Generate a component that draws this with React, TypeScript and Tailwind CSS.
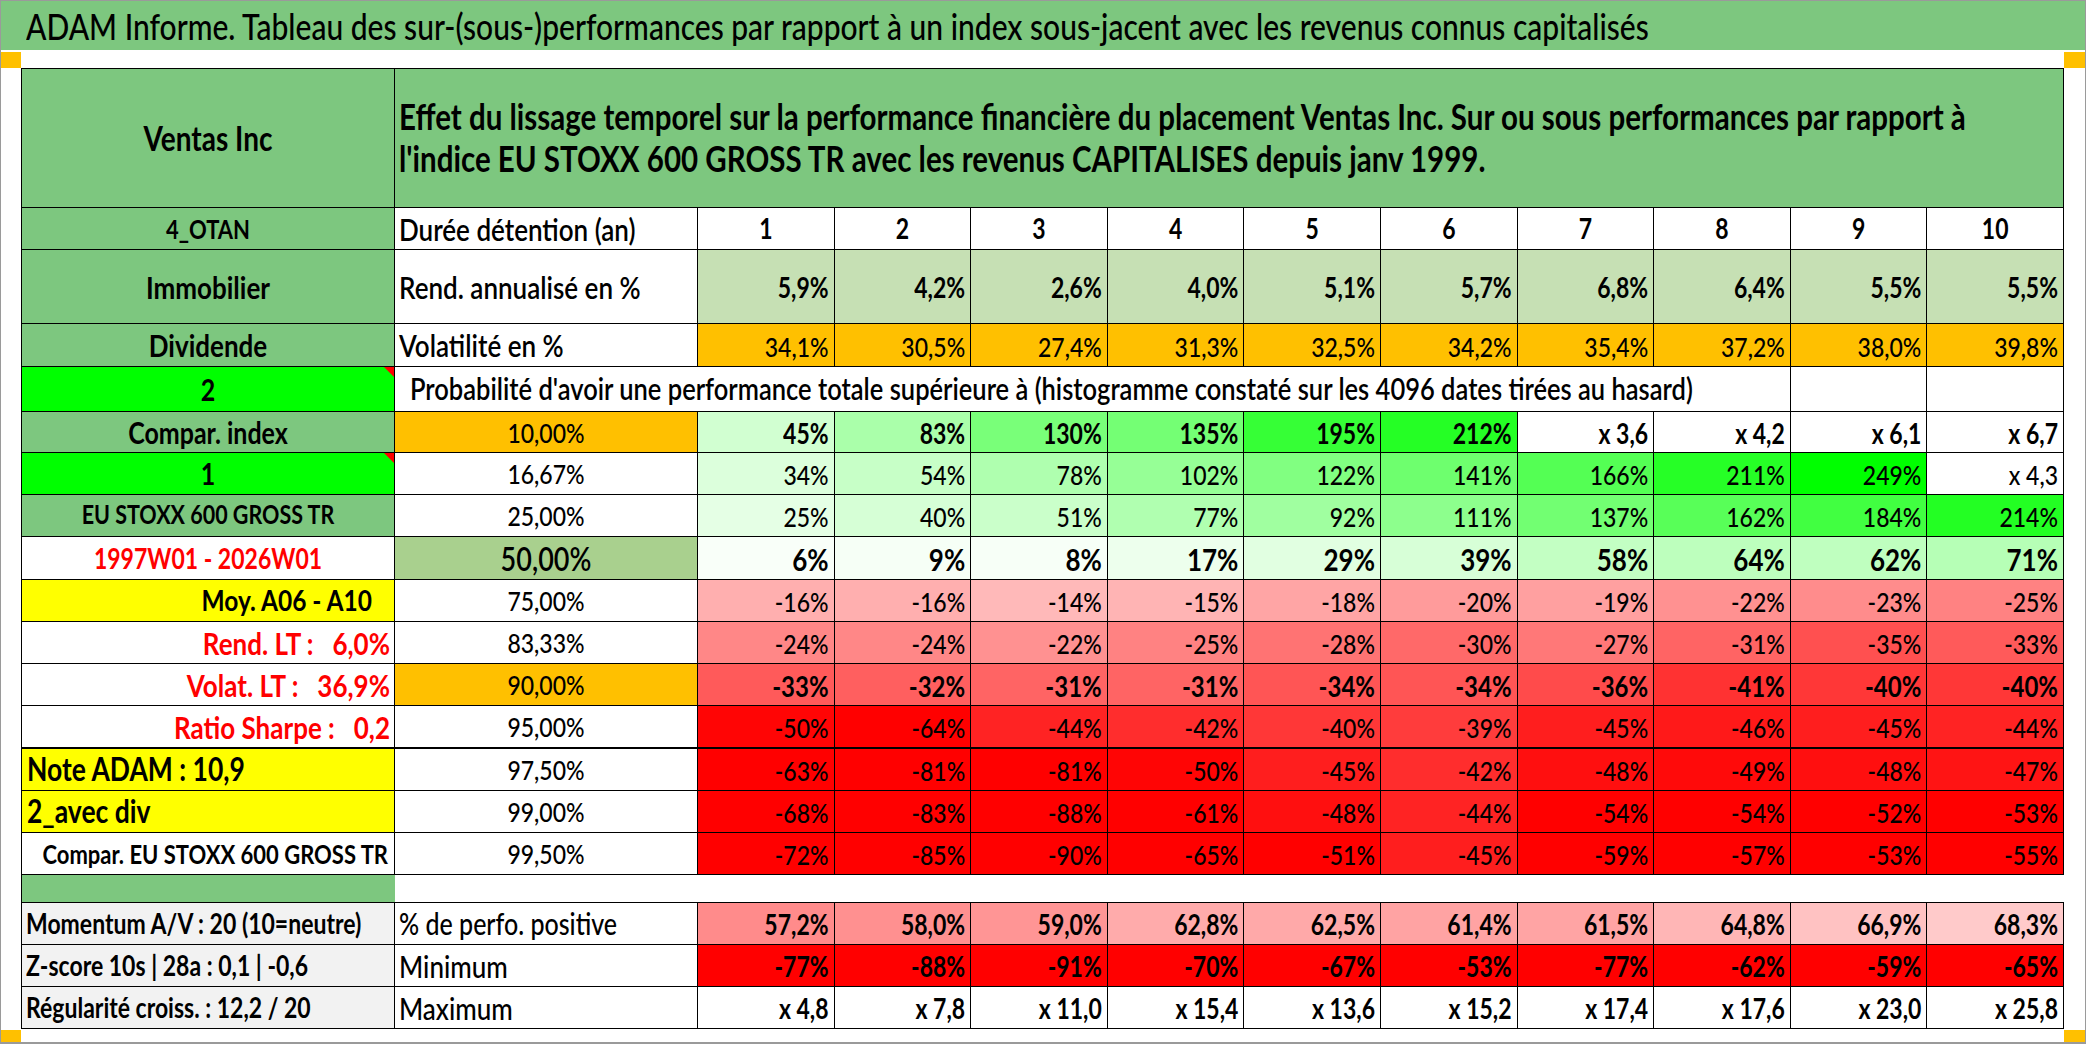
import React from 'react';

type V = number | string;

// conditional-format style colour scales (computed from the cell value)
const greenBg = (v: V) => {
    if (typeof v !== 'number') return '#ffffff';
    const g = Math.max(0, Math.round(255 - v * 1.03));
    return `rgb(${g},255,${g})`;
};
const redBg = (v: V) => {
    if (typeof v !== 'number') return '#ffffff';
    const t = Math.min(1, Math.abs(v) / 51);
    const g = Math.round(255 * (1 - t));
    return `rgb(255,${g},${g})`;
};
const pinkBg = (v: number) => {
    const g = Math.min(255, Math.round(139 + (v - 57.2) * 5.7));
    return `rgb(255,${g},${g})`;
};
const fmt = (v: V) => (typeof v === 'number' ? `${v}%` : v);
const comma = (n: number) => n.toFixed(1).replace('.', ',') + '%';

const ROW = 'grid grid-cols-[373px_303px_repeat(10,minmax(0,1fr))]';
const CELL = 'flex items-center border-r border-b border-black whitespace-nowrap overflow-hidden leading-none';
const VAL = `${CELL} justify-end pr-[5px] pt-[2px]`;

// the sheet capture is a bit taller than wide, so the glyphs are stretched vertically
const T = ({ children }: { children: React.ReactNode }) => (
    <span className="inline-block scale-y-[1.2]">{children}</span>
);

const Triangle = () => (
    <span className="absolute right-0 top-0 h-0 w-0 border-l-[10px] border-t-[10px] border-l-transparent border-t-[#ff0000]" />
);

const rend = ['5,9%', '4,2%', '2,6%', '4,0%', '5,1%', '5,7%', '6,8%', '6,4%', '5,5%', '5,5%'];
const vol = ['34,1%', '30,5%', '27,4%', '31,3%', '32,5%', '34,2%', '35,4%', '37,2%', '38,0%', '39,8%'];

const probRows: {
    label: string; lc: string; tri?: boolean; pct: string; pc: string;
    vals: V[]; vc: string; neg?: boolean; h: string; thick?: boolean;
}[] = [
    { label: 'Compar. index', lc: 'bg-[#7dc77f] justify-center font-bold text-[25px]', pct: '10,00%', pc: 'bg-[#ffc000] text-[23px] font-medium', vals: [45, 83, 130, 135, 195, 212, 'x 3,6', 'x 4,2', 'x 6,1', 'x 6,7'], vc: 'font-bold text-[23px]', h: 'h-[41px]' },
    { label: '1', lc: 'bg-[#00ff00] justify-center font-bold text-[25px]', tri: true, pct: '16,67%', pc: 'text-[23px] font-medium', vals: [34, 54, 78, 102, 122, 141, 166, 211, 249, 'x 4,3'], vc: 'text-[23px] font-medium', h: 'h-[42px]' },
    { label: 'EU STOXX 600 GROSS TR', lc: 'bg-[#7dc77f] justify-center font-bold text-[21.5px]', pct: '25,00%', pc: 'text-[23px] font-medium', vals: [25, 40, 51, 77, 92, 111, 137, 162, 184, 214], vc: 'text-[23px] font-medium', h: 'h-[42px]' },
    { label: '1997W01 - 2026W01', lc: 'justify-center font-bold text-[23px] text-[#ff0000]', pct: '50,00%', pc: 'bg-[#a9d08e] text-[27px] font-semibold', vals: [6, 9, 8, 17, 29, 39, 58, 64, 62, 71], vc: 'font-bold text-[26px]', h: 'h-[43px]' },
    { label: 'Moy. A06 - A10', lc: 'bg-[#ffff00] justify-end pr-[22px] font-bold text-[24.5px]', pct: '75,00%', pc: 'text-[23px] font-medium', vals: [-16, -16, -14, -15, -18, -20, -19, -22, -23, -25], vc: 'text-[23px] font-medium', neg: true, h: 'h-[42px]' },
    { label: 'Rend. LT :\u00a0\u00a0\u00a06,0%', lc: 'justify-end pr-[4px] font-bold text-[26px] text-[#ff0000]', pct: '83,33%', pc: 'text-[23px] font-medium', vals: [-24, -24, -22, -25, -28, -30, -27, -31, -35, -33], vc: 'text-[23px] font-medium', neg: true, h: 'h-[42px]' },
    { label: 'Volat. LT :\u00a0\u00a0\u00a036,9%', lc: 'justify-end pr-[4px] font-bold text-[26px] text-[#ff0000]', pct: '90,00%', pc: 'bg-[#ffc000] text-[23px] font-medium', vals: [-33, -32, -31, -31, -34, -34, -36, -41, -40, -40], vc: 'font-bold text-[24px]', neg: true, h: 'h-[42px]' },
    { label: 'Ratio Sharpe :\u00a0\u00a0\u00a00,2', lc: 'justify-end pr-[4px] font-bold text-[26px] text-[#ff0000]', pct: '95,00%', pc: 'text-[23px] font-medium', vals: [-50, -64, -44, -42, -40, -39, -45, -46, -45, -44], vc: 'text-[23px] font-medium', neg: true, h: 'h-[43px]', thick: true },
    { label: 'Note ADAM : 10,9', lc: 'bg-[#ffff00] justify-start pl-[5px] font-bold text-[26.5px]', pct: '97,50%', pc: 'text-[23px] font-medium', vals: [-63, -81, -81, -50, -45, -42, -48, -49, -48, -47], vc: 'text-[23px] font-medium', neg: true, h: 'h-[42px]' },
    { label: '2_avec div', lc: 'bg-[#ffff00] justify-start pl-[5px] font-bold text-[26.5px]', pct: '99,00%', pc: 'text-[23px] font-medium', vals: [-68, -83, -88, -61, -48, -44, -54, -54, -52, -53], vc: 'text-[23px] font-medium', neg: true, h: 'h-[42px]' },
    { label: 'Compar. EU STOXX 600 GROSS TR', lc: 'justify-end pr-[6px] font-bold text-[22px]', pct: '99,50%', pc: 'text-[23px] font-medium', vals: [-72, -85, -90, -65, -51, -45, -59, -57, -53, -55], vc: 'text-[23px] font-medium', neg: true, h: 'h-[42px]' },
];

const momentum = [57.2, 58.0, 59.0, 62.8, 62.5, 61.4, 61.5, 64.8, 66.9, 68.3];
const minimum = [-77, -88, -91, -70, -67, -53, -77, -62, -59, -65];
const maximum = ['x 4,8', 'x 7,8', 'x 11,0', 'x 15,4', 'x 13,6', 'x 15,2', 'x 17,4', 'x 17,6', 'x 23,0', 'x 25,8'];

export default function App() {
    return (
        <div className="w-[2086px] h-[1044px] overflow-hidden bg-white border border-b-2 border-[#9a9a9a] font-['Lato',sans-serif] text-black">
            {/* Title band */}
            <div className="h-[49px] bg-[#7dc77f] flex items-center pl-[25px] text-[30px] font-medium leading-none">
                <T>ADAM Informe. Tableau des sur-(sous-)performances par rapport à un index sous-jacent avec les revenus connus capitalisés</T>
            </div>
            <div className="h-[18px] flex items-end justify-between">
                <div className="w-[20px] h-[16px] bg-[#ffc000]" />
                <div className="w-[21px] h-[16px] bg-[#ffc000]" />
            </div>

            {/* Table */}
            <div className="ml-[20px] w-[2043px] border-l border-t border-black">
                <div className={`${ROW} h-[139px]`}>
                    <div className={`${CELL} bg-[#7dc77f] justify-center font-bold text-[28px]`}><T>Ventas Inc</T></div>
                    <div className="col-span-11 flex flex-col justify-center border-r border-b border-black bg-[#7dc77f] pl-[4px] font-bold text-[29.5px] leading-[42px] whitespace-nowrap">
                        <div className="scale-y-[1.2] origin-left">Effet du lissage temporel sur la performance financière du placement Ventas Inc. Sur ou sous performances par rapport à</div>
                        <div className="scale-y-[1.2] origin-left">l'indice EU STOXX 600 GROSS TR avec les revenus CAPITALISES depuis janv 1999.</div>
                    </div>
                </div>

                <div className={`${ROW} h-[42px]`}>
                    <div className={`${CELL} bg-[#7dc77f] justify-center font-bold text-[22px]`}><T>4_OTAN</T></div>
                    <div className={`${CELL} pl-[4px] font-semibold text-[26px]`}><T>Durée détention (an)</T></div>
                    {Array.from({ length: 10 }, (_, i) => (
                        <div key={i} className={`${CELL} justify-center font-bold text-[23px]`}><T>{i + 1}</T></div>
                    ))}
                </div>

                <div className={`${ROW} h-[74px]`}>
                    <div className={`${CELL} bg-[#7dc77f] justify-center font-bold text-[26px]`}><T>Immobilier</T></div>
                    <div className={`${CELL} pl-[4px] font-semibold text-[26px]`}><T>Rend. annualisé en %</T></div>
                    {rend.map((v, i) => (
                        <div key={i} className={`${VAL} bg-[#c6e0b4] font-bold text-[23px]`}><T>{v}</T></div>
                    ))}
                </div>

                <div className={`${ROW} h-[43px]`}>
                    <div className={`${CELL} bg-[#7dc77f] justify-center font-bold text-[26px]`}><T>Dividende</T></div>
                    <div className={`${CELL} pl-[4px] font-semibold text-[26px]`}><T>Volatilité en %</T></div>
                    {vol.map((v, i) => (
                        <div key={i} className={`${VAL} bg-[#ffc000] text-[23px] font-medium`}><T>{v}</T></div>
                    ))}
                </div>

                <div className={`${ROW} h-[45px]`}>
                    <div className={`${CELL} relative bg-[#00ff00] justify-center font-bold text-[25px]`}>
                        <T>2</T>
                        <Triangle />
                    </div>
                    <div className={`${CELL} col-span-9 pl-[15px] font-semibold text-[25.5px]`}>
                        <T>Probabilité d'avoir une performance totale supérieure à (histogramme constaté sur les 4096 dates tirées au hasard)</T>
                    </div>
                    <div className={CELL} />
                    <div className={CELL} />
                </div>

                {probRows.map((r) => (
                    <div key={r.label} className={`${ROW} ${r.h}`}>
                        <div className={`${CELL} ${r.lc} ${r.thick ? 'border-b-2' : ''} ${r.tri ? 'relative' : ''}`}>
                            <T>{r.label}</T>
                            {r.tri && <Triangle />}
                        </div>
                        <div className={`${CELL} ${r.pc} justify-center ${r.thick ? 'border-b-2' : ''}`}><T>{r.pct}</T></div>
                        {r.vals.map((v, i) => (
                            <div
                                key={i}
                                className={`${VAL} ${r.vc} ${r.thick ? 'border-b-2' : ''}`}
                                style={{ backgroundColor: r.neg ? redBg(v) : greenBg(v) }}
                            >
                                <T>{fmt(v)}</T>
                            </div>
                        ))}
                    </div>
                ))}

                {/* spacer row */}
                <div className={`${ROW} h-[28px]`}>
                    <div className="bg-[#7dc77f] border-b border-black" />
                    <div className="col-span-11 border-b border-black bg-white" />
                </div>

                <div className={`${ROW} h-[42px]`}>
                    <div className={`${CELL} bg-[#f2f2f2] pl-[4px] font-bold text-[23px]`}><T>Momentum A/V : 20 (10=neutre)</T></div>
                    <div className={`${CELL} pl-[4px] font-medium text-[25px]`}><T>% de perfo. positive</T></div>
                    {momentum.map((v, i) => (
                        <div key={i} className={`${VAL} font-bold text-[23px]`} style={{ backgroundColor: pinkBg(v) }}><T>{comma(v)}</T></div>
                    ))}
                </div>
                <div className={`${ROW} h-[42px]`}>
                    <div className={`${CELL} bg-[#f2f2f2] pl-[4px] font-bold text-[23px]`}><T>Z-score 10s | 28a : 0,1 | -0,6</T></div>
                    <div className={`${CELL} pl-[4px] font-medium text-[26px]`}><T>Minimum</T></div>
                    {minimum.map((v, i) => (
                        <div key={i} className={`${VAL} font-bold text-[23px]`} style={{ backgroundColor: redBg(v) }}><T>{fmt(v)}</T></div>
                    ))}
                </div>
                <div className={`${ROW} h-[42px]`}>
                    <div className={`${CELL} bg-[#f2f2f2] pl-[4px] font-bold text-[23px]`}><T>Régularité croiss. : 12,2 / 20</T></div>
                    <div className={`${CELL} pl-[4px] font-medium text-[26px]`}><T>Maximum</T></div>
                    {maximum.map((v, i) => (
                        <div key={i} className={`${VAL} font-bold text-[23px]`}><T>{v}</T></div>
                    ))}
                </div>
            </div>

            <div className="h-[14px] flex items-end justify-between">
                <div className="w-[20px] h-[13px] bg-[#ffc000]" />
                <div className="w-[21px] h-[13px] bg-[#ffc000]" />
            </div>
        </div>
    );
}
